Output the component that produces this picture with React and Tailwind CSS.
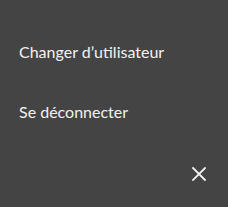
export default function App() {
  return (
    <div className="w-[228px] h-[207px] bg-[#444444] flex flex-col text-[#f2f2f2]" style={{ fontFamily: '"Lato", "Noto Sans", sans-serif' }}>
      <div className="flex flex-col pl-[19px] pt-[42px] gap-[40px]">
        <div className="text-[16px] leading-[20px] h-[20px]">Changer d’utilisateur</div>
        <div className="text-[16px] leading-[20px] h-[20px]">Se déconnecter</div>
      </div>
      <div className="flex justify-end pr-[22px] pt-[45px]">
        <svg width="14" height="14" viewBox="0 0 14 14">
          <path d="M1 1 L13 13 M13 1 L1 13" stroke="#f2f2f2" strokeWidth="1.8" strokeLinecap="square" />
        </svg>
      </div>
    </div>
  );
}
